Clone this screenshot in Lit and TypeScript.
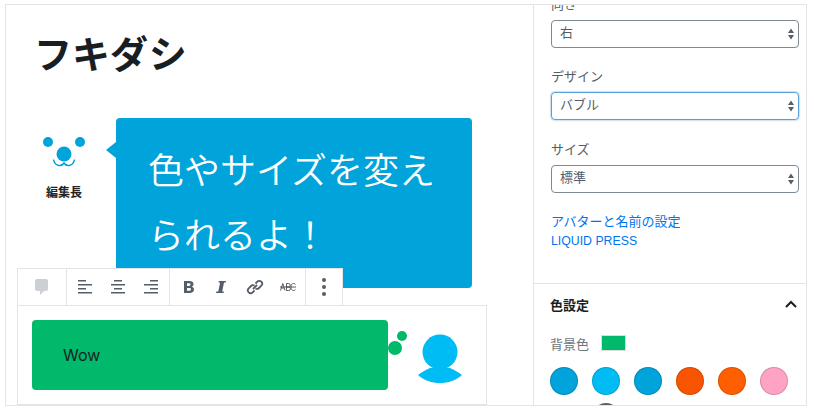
import { LitElement, html, css } from "lit";
import { customElement } from "lit/decorators.js";

@customElement("app-root")
export class AppRoot extends LitElement {
  static styles = css`
    :host { display: block; width: 814px; height: 414px; background: #fff; overflow: hidden; font-family: "Liberation Sans", "Noto Sans CJK JP", sans-serif; }
    .frame { box-sizing: border-box; margin: 4px 0 0 5px; width: 802px; height: 402px; border: 1px solid #e2e4e7; display: flex; overflow: hidden; }
    .main { width: 527px; flex: none; display: flex; flex-direction: column; overflow: hidden; }
    h1 { margin: 26px 0 0 28px; font-size: 38px; line-height: 48px; font-weight: 700; color: #191e23; height: 48px; }
    .row1 { display: flex; margin: 39px 0 0 0; align-items: flex-start; }
    .who { width: 110px; flex: none; display: flex; flex-direction: column; align-items: flex-start; }
    .face { display: block; margin: 19px 0 0 36px; }
    .name { margin: 14px 0 0 40px; font-size: 12px; font-weight: 700; line-height: 16px; color: #222; }
    .bubble { position: relative; box-sizing: border-box; width: 356px; height: 170px; background: #00a3da; border-radius: 4px; color: #fff; font-size: 36px; line-height: 65px; padding: 21px 32px; font-weight: 350; }
    .bubble::before { content: ""; position: absolute; left: -10px; top: 24px; border: 8px solid transparent; border-left: 0; border-right: 10px solid #00a3da; }
    .row2 { position: relative; margin-top: -20px; margin-left: 11px; }
    .toolbar { position: relative; box-sizing: border-box; width: 326px; height: 38px; background: #fff; border: 1px solid #e2e4e7; display: flex; color: #555d66; }
    .grp { display: flex; align-items: center; border-right: 1px solid #e2e4e7; height: 100%; box-sizing: border-box; flex: none; }
    .grp:last-child { border-right: 0; }
    .g1 { width: 49px; justify-content: center; }
    .g2 { width: 103px; padding-left: 10px; gap: 17px; }
    .g3 { width: 136px; padding-left: 14px; }
    .g4 { width: 37px; justify-content: center; padding-right: 1px; }
    .i2 { margin-left: 22px; }
    .i3 { margin-left: 20px; }
    .i4 { margin-left: 16px; }
    .block { box-sizing: border-box; width: 470px; height: 100px; margin-top: -1px; border: 1px solid #e2e4e7; display: flex; padding: 14px; }
    .green { box-sizing: border-box; flex: none; width: 356px; height: 70px; background: #00b96b; border-radius: 4px; color: #191e23; font-size: 16px; line-height: 70px; padding-left: 31px; font-family: "Inter", sans-serif; }
    .dots { display: block; flex: none; }
    .avatar { display: block; flex: none; margin: 14px 0 0 9px; }
    .side { flex: 1; border-left: 1px solid #e2e4e7; overflow: hidden; font-size: 13px; color: #555d66; }
    .sec1 { padding: 0 7px 0 17px; box-sizing: border-box; margin-top: -9px; border-bottom: 1px solid #e2e4e7; height: 288px; }
    label { display: block; line-height: 18px; height: 18px; color: #555d66; }
    .sel { box-sizing: border-box; height: 28px; margin-top: 6px; border: 1px solid #7e8993; border-radius: 4px; display: flex; align-items: center; justify-content: space-between; padding: 0 4px 0 8px; color: #555d66; margin-bottom: 21px; }
    .sel span { padding-bottom: 2px; line-height: 16px; }
    .sel.first { margin-bottom: 20px; }
    .sel.focus { border-color: #5b9dd9; box-shadow: 0 0 2px rgba(30,140,190,.8); }
    .arrows { display: block; }
    .link { display: block; color: #0073f0; line-height: 19px; font-size: 13px; }
    .link.lat { font-size: 12.3px; margin-top: 1px; }
    .links { margin-top: -2px; }
    .sec2 { padding: 0 9px 0 16px; }
    .h2 { display: flex; justify-content: space-between; align-items: center; margin-top: 10px; height: 20px; font-weight: 700; color: #191e23; }
    .bg { display: flex; align-items: center; margin-top: 21px; height: 16px; color: #6c7781; gap: 12px; }
    .sw { width: 25px; height: 16px; background: #00b96b; border: 1px solid #ddd; box-sizing: border-box; }
    .colors { display: flex; gap: 14px; margin-top: 16px; }
    .c { width: 28px; height: 28px; border-radius: 50%; box-sizing: border-box; border: 1px solid rgba(0,0,0,.15); flex: none; }
    .colors2 { margin: 8px 0 0 42px; width: 28px; height: 28px; border-radius: 50%; background: #555d66; }
  `;

  private arrows() {
    return html`<svg class="arrows" width="6" height="12" viewBox="0 0 6 12"><path d="M3 0.500 6 5H0Z M3 11.500 0 7H6Z" fill="#555d66"/></svg>`;
  }

  render() {
    const colors = ["#00a3da", "#00bcf5", "#00a3da", "#f95400", "#ff5f00", "#ffa3c5"];
    return html`<div class="frame">
      <div class="main">
        <h1>フキダシ</h1>
        <div class="row1">
          <div class="who">
            <svg class="face" width="46" height="34" viewBox="0 0 46 34">
              <circle cx="6" cy="5" r="5" fill="#00a3da"/>
              <circle cx="38" cy="5" r="5" fill="#00a3da"/>
              <circle cx="22" cy="17" r="7.500" fill="#00a3da"/>
              <path d="M11.500 22.500c1 6 7.500 8 10.500 3.500c3 4.500 9.500 2.500 10.500-3.500" fill="none" stroke="#00a3da" stroke-width="1.500"/>
            </svg>
            <div class="name">編集長</div>
          </div>
          <div class="bubble">色やサイズを変え<br>られるよ！</div>
        </div>
        <div class="row2">
          <div class="toolbar">
            <div class="grp g1"><svg width="20" height="20" viewBox="0 0 20 20"><path d="M5 2h9a2 2 0 0 1 2 2v8a2 2 0 0 1-2 2h-2l-4 4v-4H5a2 2 0 0 1-2-2V4a2 2 0 0 1 2-2Z" fill="#ccd0d4"/></svg></div>
            <div class="grp g2">
              <svg width="16" height="14" viewBox="0 0 16 14" fill="#555d66"><path d="M1 0h8v1.500H1zM1 4h14v1.500H1zM1 8h8v1.500H1zM1 12h14v1.500H1z"/></svg>
              <svg width="16" height="14" viewBox="0 0 16 14" fill="#555d66"><path d="M4 0h8v1.500H4zM1 4h14v1.500H1zM4 8h8v1.500H4zM1 12h14v1.500H1z"/></svg>
              <svg width="16" height="14" viewBox="0 0 16 14" fill="#555d66"><path d="M7 0h8v1.500H7zM1 4h14v1.500H1zM7 8h8v1.500H7zM1 12h14v1.500H1z"/></svg>
            </div>
            <div class="grp g3">
              <svg width="10" height="12" viewBox="0 0 10 12" fill="#555d66"><path fill-rule="evenodd" d="M0 0h5.200C8 0 9.500 1.100 9.500 3.100c0 1.300-.7 2.200-1.900 2.600 1.500.3 2.400 1.300 2.400 2.800C10 10.700 8.300 12 5.500 12H0ZM3 2.200V5h1.800C6 5 6.600 4.500 6.600 3.600S6 2.200 4.800 2.200ZM3 7v2.800h2.100C6.300 9.800 7 9.300 7 8.400S6.300 7 5.100 7Z"/></svg>
              <svg class="i2" width="10" height="12" viewBox="0 0 10 12" fill="#555d66"><path d="M2.800 0H10l-.3 1.600H8L6.200 10.400h1.700L7.600 12H0l.3-1.600h2L4.100 1.600H2.500Z"/></svg>
              <svg class="i3" width="18" height="18" viewBox="0 0 18 18" fill="none" stroke="#555d66" stroke-width="1.800"><path d="M7 11l4-4M9.500 5.500l1.800-1.800a2.800 2.800 0 0 1 4 4L13 10a2.800 2.800 0 0 1-3.500.4M8.500 12.500l-1.800 1.800a2.800 2.800 0 0 1-4-4L5 8a2.800 2.800 0 0 1 3.500-.4"/></svg>
              <svg class="i4" width="16" height="8" viewBox="0 0 16 8" fill="none" stroke="#555d66" stroke-width="1"><path d="M.5 7.500 2.800.5 5 7.500M1.300 5h3M6.500.5v7h2.200a1.700 1.700 0 0 0 0-3.500H6.500h2a1.700 1.700 0 0 0 0-3.500ZM15.500 1.500a2 2 0 0 0-1.800-1c-2 0-2.700 1.400-2.700 3.500s.7 3.500 2.700 3.500a2 2 0 0 0 1.800-1M0 4h16"/></svg>
            </div>
            <div class="grp g4"><svg width="4" height="18" viewBox="0 0 4 18" fill="#555d66"><circle cx="2" cy="2" r="2"/><circle cx="2" cy="9" r="2"/><circle cx="2" cy="16" r="2"/></svg></div>
          </div>
          <div class="block">
            <div class="green">Wow</div>
            <svg class="dots" width="20" height="36" viewBox="0 0 20 36" fill="#00b96b"><circle cx="14" cy="16" r="5"/><circle cx="7" cy="28" r="7"/></svg>
            <svg class="avatar" width="46" height="52" viewBox="0 0 46 52" fill="#00bcf5"><circle cx="23" cy="18" r="17.500"/><path d="M1 41c3-2 7-5 12-7h20c5 2 9 5 12 7-6 5.500-14 8-22 8s-16-2.500-22-8Z"/></svg>
          </div>
        </div>
      </div>
      <div class="side">
        <div class="sec1">
          <label>向き</label>
          <div class="sel first"><span>右</span>${this.arrows()}</div>
          <label>デザイン</label>
          <div class="sel focus"><span>バブル</span>${this.arrows()}</div>
          <label>サイズ</label>
          <div class="sel"><span>標準</span>${this.arrows()}</div>
          <div class="links"><a class="link">アバターと名前の設定</a><a class="link lat">LIQUID PRESS</a></div>
        </div>
        <div class="sec2">
          <div class="h2"><span>色設定</span><svg width="12" height="8" viewBox="0 0 12 8" fill="none" stroke="#191e23" stroke-width="2"><path d="M1 7l5-5 5 5"/></svg></div>
          <div class="bg"><span>背景色</span><div class="sw"></div></div>
          <div class="colors">${colors.map((c) => html`<div class="c" style="background:${c}"></div>`)}</div>
          <div class="colors2"></div>
        </div>
      </div>
    </div>`;
  }
}
